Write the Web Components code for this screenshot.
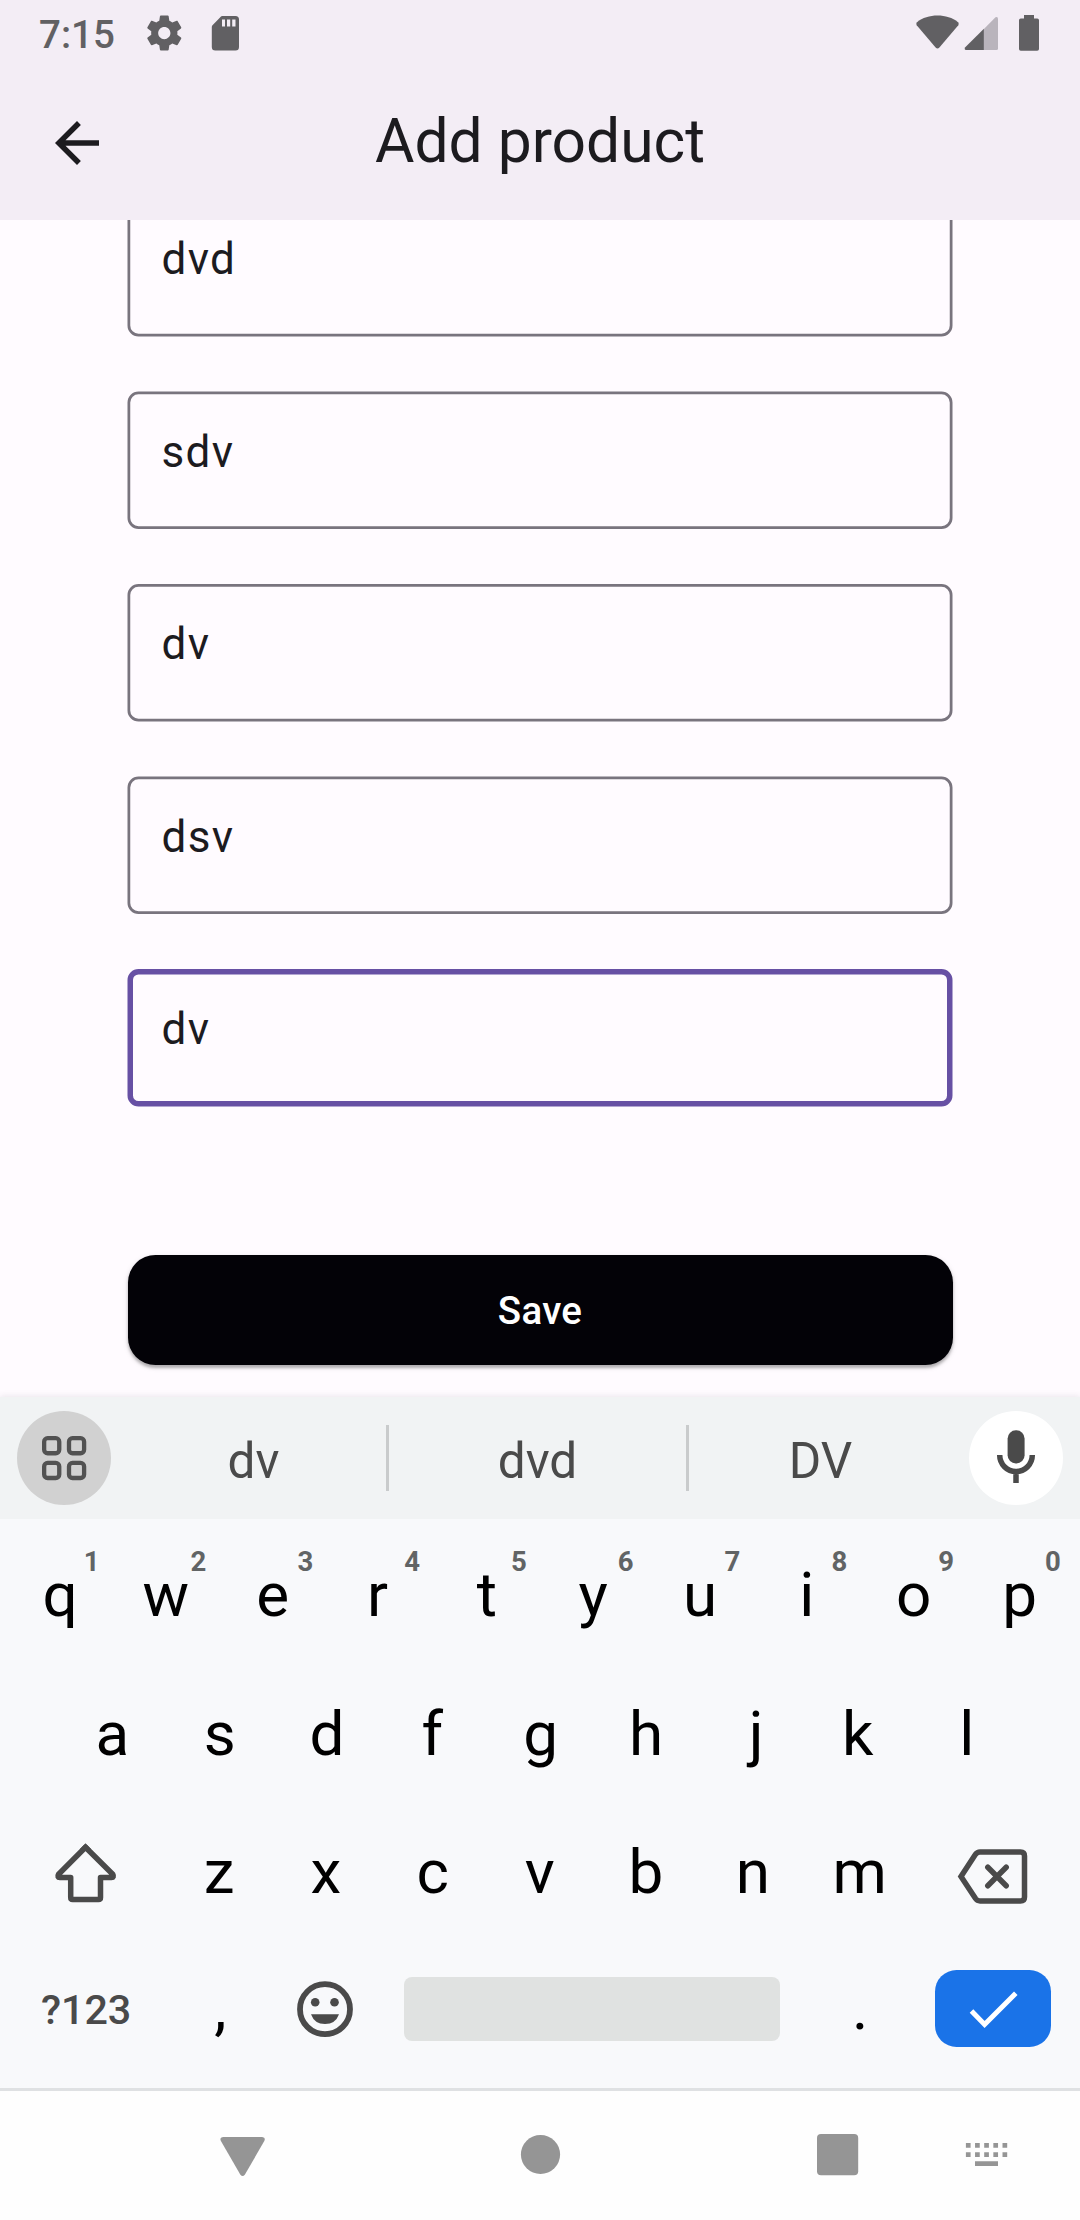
<!DOCTYPE html>
<html lang="en">
<head>
<meta charset="utf-8">
<title>Add product</title>
<style>
html,body{margin:0;padding:0;background:#fff}
body{width:1080px;height:2220px;overflow:hidden;font-family:Roboto,"Liberation Sans",sans-serif}
</style>
</head>
<body>
<product-screen></product-screen>
<script>
const define = (name, html, setup) => {
  const tpl = document.createElement('template');
  tpl.innerHTML = html;
  customElements.define(name, class extends HTMLElement {
    constructor() {
      super();
      this.attachShadow({ mode: 'open' }).append(tpl.content.cloneNode(true));
    }
    connectedCallback() { if (setup) setup(this, this.shadowRoot); }
  });
};

// name: [viewBox, markup]; one viewBox unit is one pixel
const ICONS = {
  gear: ['143 12.6 42 42', '<path transform="translate(143.3 12.6) scale(1.75)" fill="#616063" d="M19.43 12.98c.04-.32.07-.64.07-.98s-.03-.66-.07-.98l2.11-1.65c.19-.15.24-.42.12-.64l-2-3.46c-.12-.22-.39-.3-.61-.22l-2.49 1c-.52-.4-1.08-.73-1.69-.98l-.38-2.65C14.46 2.18 14.25 2 14 2h-4c-.25 0-.46.18-.49.42l-.38 2.65c-.61.25-1.17.59-1.69.98l-2.49-1c-.23-.09-.49 0-.61.22l-2 3.46c-.13.22-.07.49.12.64l2.11 1.65c-.04.32-.07.65-.07.98s.03.66.07.98l-2.11 1.65c-.19.15-.24.42-.12.64l2 3.46c.12.22.39.3.61.22l2.49-1c.52.4 1.08.73 1.69.98l.38 2.65c.03.24.24.42.49.42h4c.25 0 .46-.18.49-.42l.38-2.65c.61-.25 1.17-.59 1.69-.98l2.49 1c.23.09.49 0 .61-.22l2-3.46c.12-.22.07-.49-.12-.64l-2.11-1.65zM12 15.5c-1.93 0-3.5-1.57-3.5-3.5s1.57-3.5 3.5-3.5 3.5 1.57 3.5 3.5-1.57 3.5-3.5 3.5z"/>'],
  sd: ['205 12 42 42', '<path fill="#616063" fill-rule="evenodd" d="M222 16H235.500Q239 16 239 19.500V47Q239 50.500 235.500 50.500H215.300Q211.800 50.500 211.800 47V27Q211.800 26 212.500 25.200L221 16.600Q221.500 16 222 16ZM222 19.500V26.500H225V19.500ZM227 19.500V26.500H230.200V19.500ZM232.200 19.500V26.500H235.500V19.500Z"/>'],
  wifi: ['914 12 48 42', '<path fill="#616063" d="M917 22.200C927.500 13.300 947.500 13.300 958 22.200Q959.400 23.500 958.300 25.200L939.400 47.400Q937.500 49.400 935.600 47.400L916.700 25.200Q915.600 23.500 917 22.200Z"/>'],
  signal: ['962 12 40 42', '<path fill="#b9b4bc" d="M983.900 29V50H996.500Q998 50 998 48.500V18.500Q997.500 16.500 995.500 17.200Z"/><path fill="#616063" d="M983.900 28.700V50H966Q964 49.500 965 47.500Z"/>'],
  battery: ['1017 12 24 42', '<path fill="#616063" d="M1024 15H1034V18.400H1037.200Q1039 18.400 1039 20.200V49Q1039 50.800 1037.200 50.800H1020.800Q1019 50.800 1019 49V20.200Q1019 18.400 1020.800 18.400H1024Z"/>'],
  back: ['0 0 66 66', '<path transform="scale(2.75)" fill="#1c1b1f" d="M20 11H7.830l5.590-5.590L12 4l-8 8 8 8 1.410-1.410L7.830 13H20v-2z"/>'],
  apps: ['17 1411 94 94', '<circle cx="64" cy="1458" r="47" fill="#d1d1d1"/><g fill="none" stroke="#525252" stroke-width="4.300"><rect x="44.150" y="1438.150" width="15.100" height="15.100" rx="3.500"/><rect x="69" y="1438.150" width="15.100" height="15.100" rx="3.500"/><rect x="44.150" y="1462.900" width="15.100" height="15.100" rx="3.500"/><rect x="69" y="1462.900" width="15.100" height="15.100" rx="3.500"/></g>'],
  mic: ['969 1411 94 94', '<circle cx="1016" cy="1458" r="47" fill="#fff"/><rect x="1007.600" y="1430.300" width="17" height="33.200" rx="8.300" fill="#4a4a4a"/><path fill="none" stroke="#4a4a4a" stroke-width="5.500" d="M999.700 1455A16.300 16.600 0 0 0 1032.300 1455M1016 1472V1483"/>'],
  shift: ['6 1804 160 138', '<path fill="none" stroke="#4a4a4a" stroke-width="5.500" stroke-linejoin="round" d="M85.500 1847.200L58.600 1874.200Q56.800 1877.400 60 1877.600H70.700V1897.500Q70.700 1899.500 72.700 1899.500H98.500Q100.500 1899.500 100.500 1897.500V1877.600H111.300Q114.500 1877.400 112.700 1874.200Z"/><path fill="#4a4a4a" d="M85.500 1843.300L80 1849H91Z"/>'],
  erase: ['914 1804 160 138', '<g fill="none" stroke="#4a4a4a" stroke-width="5.500"><path d="M961 1876.500L975.500 1854.300Q977.200 1851.900 980 1851.900H1020.500Q1024.500 1851.900 1024.500 1855.900V1896.900Q1024.500 1900.900 1020.500 1900.900H980Q977.200 1900.900 975.500 1898.500Z"/><path stroke-linecap="round" d="M987.800 1867.200L1006.200 1885.800M1006.200 1867.200L987.800 1885.800"/></g>'],
  smile: ['273 1943 106 138', '<g fill="#4a4a4a"><circle cx="325" cy="2009.200" r="25" fill="none" stroke="#4a4a4a" stroke-width="5.800"/><circle cx="315.200" cy="2002.200" r="4.300"/><circle cx="334.500" cy="2002.200" r="4.300"/><path d="M311 2014.200H339Q335.500 2024 325 2024Q314.500 2024 311 2014.200Z"/></g>'],
  space: ['380 1943 426 138', '<rect x="404" y="1977" width="376" height="64" rx="8" fill="#e0e2e1"/>'],
  enter: ['914 1943 160 138', '<rect x="935" y="1970" width="116" height="77" rx="21.500" fill="#1a73e8"/><path fill="none" stroke="#fff" stroke-width="5" d="M971.500 2011L984.600 2024.500L1015.800 1993.200"/>'],
  navback: ['212 2125 60 60', '<path fill="#959595" d="M223 2137H262.200Q266 2137.500 264.300 2141L244.800 2174.800Q242.600 2177.400 240.400 2174.800L220.900 2141Q219.200 2137.500 223 2137Z"/>'],
  navhome: ['510 2125 60 60', '<circle cx="540.500" cy="2154.500" r="19.600" fill="#959595"/>'],
  navrecent: ['807 2125 60 60', '<rect x="817" y="2134" width="41.200" height="41.300" rx="4" fill="#959595"/>'],
  navime: ['956 2125 60 60', '<path fill="#959595" d="' + [2143, 2152.2].map(y => [0,1,2,3,4].map(i => `M${965.9 + i * 9.150} ${y}h4.700v4.800h-4.700z`).join('')).join('') + 'M975 2161.200h23v4.800h-23z"/>']
};

define('ui-icon', '', (el, root) => {
  const [box, art] = ICONS[el.getAttribute('name')];
  const [, , w, h] = box.split(' ');
  root.innerHTML = `<style>:host{display:block;flex:none;width:${w}px;height:${h}px}svg{display:block}</style><svg width="${w}" height="${h}" viewBox="${box}">${art}</svg>`;
});

define('status-bar', `<style>
:host{display:flex;height:66px;box-sizing:border-box;padding:12px 39px 0 39px;color:#616063}
.time{font-size:38.500px;font-weight:500;line-height:46px;width:104px}
.right{display:flex;margin-left:auto}
</style>
<span class="time"><slot></slot></span><ui-icon name="gear"></ui-icon><ui-icon name="sd" style="margin-left:20px"></ui-icon>
<div class="right"><ui-icon name="wifi"></ui-icon><ui-icon name="signal"></ui-icon><ui-icon name="battery" style="margin-left:15px"></ui-icon></div>`);

define('app-bar', `<style>
:host{display:grid;grid-template-columns:66px 1fr 66px;height:154px;box-sizing:border-box;padding:0 44px;align-items:center;color:#1c1b1f}
h1{margin:-3px 0 0;font-size:60.500px;line-height:77px;font-weight:400;text-align:center}
</style><ui-icon name="back"></ui-icon><h1><slot></slot></h1>`);

define('text-field', `<style>
:host{display:grid;height:192.500px;color:#1c1b1f}
svg,.text{grid-area:1/1}
svg{display:block;overflow:visible}
.text{padding:27px 0 0 34.500px;font-size:44px;line-height:66px;letter-spacing:1.375px;height:66px}
</style><svg width="826" height="138"></svg><span class="text"><slot></slot></span>`, (el, root) => {
  const focus = el.hasAttribute('focused'), w = focus ? 5.5 : 2.75, dy = el.hasAttribute('half') ? -0.5 : 0;
  root.querySelector('svg').innerHTML = `<rect x="${0.5 + w / 2}" y="${dy + w / 2}" width="${825 - w}" height="${137.5 - w}" rx="${11 - w / 2}" fill="none" stroke="${focus ? '#6750a4' : '#79747e'}" stroke-width="${w}"/>`;
});

define('save-button', `<style>
:host{display:flex;align-items:center;justify-content:center;height:110px;margin:0 .5px;border-radius:27.500px;background:#030207;color:#fff;font-size:38.500px;font-weight:500;letter-spacing:.275px;box-shadow:0 2.500px 3px rgba(0,0,0,.26),0 2px 6px rgba(0,0,0,.1)}
</style><slot></slot>`);

define('suggestion-bar', `<style>
:host{display:grid;grid-template-columns:94px 275px 3px 297px 3px 280px 94px;padding:0 17px;height:122px;align-items:center;background:#f1f3f4;color:#4a4a4a;font-size:49.500px;box-shadow:0 -1px 6px rgba(60,50,70,.1);position:relative}
i{height:66px;background:#c9cbcc}
span{text-align:center;padding-top:6px}
.a{padding-left:10px}.c{padding-right:17px}
</style><ui-icon name="apps"></ui-icon><span class="a"><slot name="a"></slot></span><i></i><span><slot name="b"></slot></span><i></i><span class="c"><slot name="c"></slot></span><ui-icon name="mic"></ui-icon>`);

// Key legends are centred on their ink, not on their advance width.
const pen = document.createElement('canvas').getContext('2d');
pen.font = '62px Roboto';
const inkShift = ch => {
  const m = pen.measureText(ch);
  return m.width / 2 - (m.actualBoundingBoxRight - m.actualBoundingBoxLeft) / 2 - 0.3;
};

define('key-cap', `<style>
:host{display:flex;flex:1 1 0;min-width:0;justify-content:center;align-items:center;position:relative;font-size:62px;line-height:74px;color:#000}
:host([wide]){flex-grow:1.5}
:host([space]){flex-grow:4}
:host([mode]){font-size:41.250px;font-weight:500;color:#4a4a4a}
.letter{margin-top:-1.800px}
:host([mode]) .cap{margin-top:-4px}
:host([punct]) .cap{margin-top:-7px}
.hint{position:absolute;left:50%;top:18.500px;width:40px;margin-left:12.300px;text-align:center;font-size:27.500px;line-height:32px;font-weight:700;color:#616465}
</style><span class="cap"><slot></slot></span>`, (el, root) => {
  const hint = el.getAttribute('hint'), ch = el.textContent;
  if (ch.length === 1) {
    const cap = root.querySelector('.cap');
    cap.classList.add('letter');
    cap.style.marginLeft = inkShift(ch) * 2 + 'px';
  }
  if (hint) {
    const s = document.createElement('span');
    s.className = 'hint';
    s.textContent = hint;
    root.append(s);
  }
});

define('key-row', `<style>:host{display:flex;height:138.500px;padding:0 6px}:host([inset]){padding:0 59.400px}</style><slot></slot>`);

define('nav-bar', `<style>
:host{display:flex;border-top:3px solid #dfe1e3;background:#fefefe;height:129px;box-sizing:content-box;padding:0 64px 0 212px}
ui-icon{margin-top:34px}
</style><ui-icon name="navback"></ui-icon><ui-icon name="navhome" style="margin-left:238px"></ui-icon><ui-icon name="navrecent" style="margin-left:237px"></ui-icon><ui-icon name="navime" style="margin-left:89px"></ui-icon>`);

const keys = (s, hints) => [...s].map((c, i) => `<key-cap${hints ? ` hint="${hints[i]}"` : ''}>${c}</key-cap>`).join('');

define('product-screen', `<style>
:host{display:flex;flex-direction:column;width:1080px;height:2220px;background:#fffbff}
header{background:#f3edf5;height:220px;position:relative;z-index:1}
main{height:1177px;overflow:hidden;padding:0 127px;box-sizing:border-box}
.form{margin-top:-21px}
save-button{margin-top:93.500px}
.keys{background:#f8f9fb;height:569px;box-sizing:border-box;padding-top:8px;position:relative}
</style>
<header><status-bar>7:15</status-bar><app-bar>Add product</app-bar></header>
<main>
  <div class="form">
    <text-field>dvd</text-field>
    <text-field half>sdv</text-field>
    <text-field>dv</text-field>
    <text-field half>dsv</text-field>
    <text-field focused>dv</text-field>
  </div>
  <save-button>Save</save-button>
</main>
<suggestion-bar><span slot="a">dv</span><span slot="b">dvd</span><span slot="c">DV</span></suggestion-bar>
<div class="keys">
  <key-row>${keys('qwertyuiop', '1234567890')}</key-row>
  <key-row inset>${keys('asdfghjkl')}</key-row>
  <key-row><key-cap wide><ui-icon name="shift"></ui-icon></key-cap>${keys('zxcvbnm')}<key-cap wide><ui-icon name="erase"></ui-icon></key-cap></key-row>
  <key-row><key-cap wide mode>?123</key-cap><key-cap punct>,</key-cap><key-cap><ui-icon name="smile"></ui-icon></key-cap><key-cap space><ui-icon name="space"></ui-icon></key-cap><key-cap punct>.</key-cap><key-cap wide><ui-icon name="enter"></ui-icon></key-cap></key-row>
</div>
<nav-bar></nav-bar>`);
</script>
</body>
</html>
